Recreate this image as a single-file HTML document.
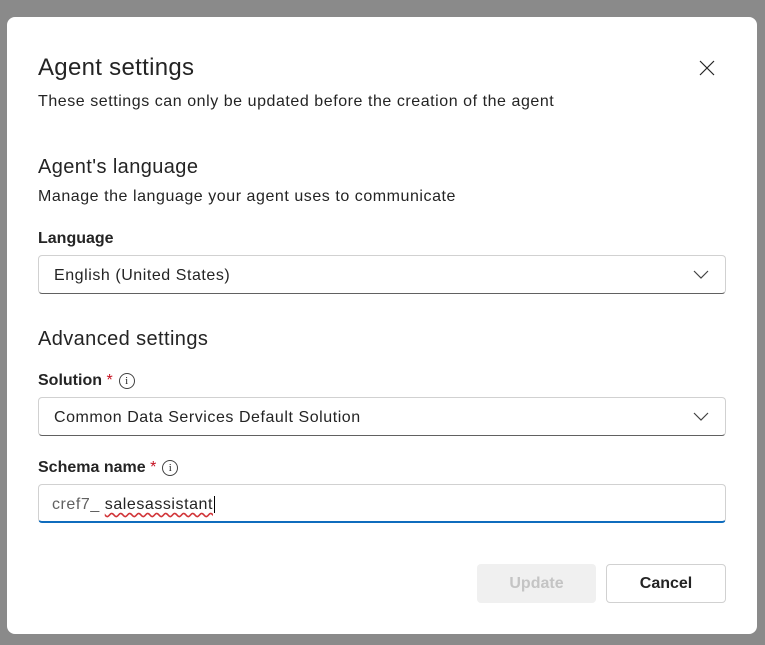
<!DOCTYPE html>
<html><head><style>
*{margin:0;padding:0;box-sizing:border-box}
body{width:765px;height:645px;background:#8a8a8a;position:relative;overflow:hidden;font-family:"Liberation Sans",sans-serif;color:#242424}
.dlg{position:absolute;left:7px;top:17px;width:750px;height:617px;background:#fff;border-radius:8px}
.t{position:absolute;white-space:nowrap}
.box{position:absolute;left:38px;width:688px;height:39px;border:1px solid #d1d1d1;border-bottom-color:#616161;border-radius:4px;background:#fff}
.chev{position:absolute;right:16px;top:12px}
.info{display:inline-block;width:16px;height:16px;border:1px solid #424242;border-radius:50%;font-size:11px;font-weight:normal;text-align:center;line-height:14px;vertical-align:1px;margin-left:6px;font-family:"Liberation Serif",serif}
.req{color:#c50f1f;font-weight:normal}
.p{font-size:16px;letter-spacing:0.55px}
.lbl{font-size:16px;font-weight:bold;letter-spacing:0px}
</style></head><body>
<div class="dlg"></div>
<div class="t" style="left:38px;top:54px;font-size:24px;letter-spacing:0.3px">Agent settings</div>
<svg style="position:absolute;left:699px;top:60px" width="16" height="16"><path d="M1 1L15 15M15 1L1 15" stroke="#242424" stroke-width="1.2"/></svg>
<div class="t p" style="left:38px;top:93px">These settings can only be updated before the creation of the agent</div>
<div class="t" style="left:38px;top:156px;font-size:20px;letter-spacing:0.4px">Agent's language</div>
<div class="t p" style="left:38px;top:188px">Manage the language your agent uses to communicate</div>
<div class="t lbl" style="left:38px;top:230px">Language</div>
<div class="box" style="top:255px"><div class="t p" style="left:15px;top:11px">English (United States)</div>
<svg class="chev" width="16" height="12"><path d="M1 3L8 10L15 3" fill="none" stroke="#424242" stroke-width="1.2"/></svg></div>
<div class="t" style="left:38px;top:328px;font-size:20px;letter-spacing:0.4px">Advanced settings</div>
<div class="t lbl" style="left:38px;top:372px">Solution <span class="req">*</span><span class="info">i</span></div>
<div class="box" style="top:397px"><div class="t p" style="left:15px;top:11px">Common Data Services Default Solution</div>
<svg class="chev" width="16" height="12"><path d="M1 3L8 10L15 3" fill="none" stroke="#424242" stroke-width="1.2"/></svg></div>
<div class="t lbl" style="left:38px;top:459px">Schema name <span class="req">*</span><span class="info">i</span></div>
<div class="box" style="top:484px;border-bottom:2px solid #0f6cbd;height:39px"><div class="t p" style="left:13px;top:11px"><span style="color:#616161">cref7_ </span><span style="text-decoration:underline wavy #d13438;text-underline-offset:3px">salesassistant</span><span style="border-left:1px solid #000;margin-left:1px"></span></div></div>
<div style="position:absolute;left:477px;top:564px;width:119px;height:39px;background:#f0f0f0;border-radius:4px;color:#c4c4c4;font-size:16px;font-weight:bold;text-align:center;line-height:39px">Update</div>
<div style="position:absolute;left:606px;top:564px;width:120px;height:39px;background:#fff;border:1px solid #d1d1d1;border-radius:4px;font-size:16px;font-weight:bold;text-align:center;line-height:37px">Cancel</div>
</body></html>
